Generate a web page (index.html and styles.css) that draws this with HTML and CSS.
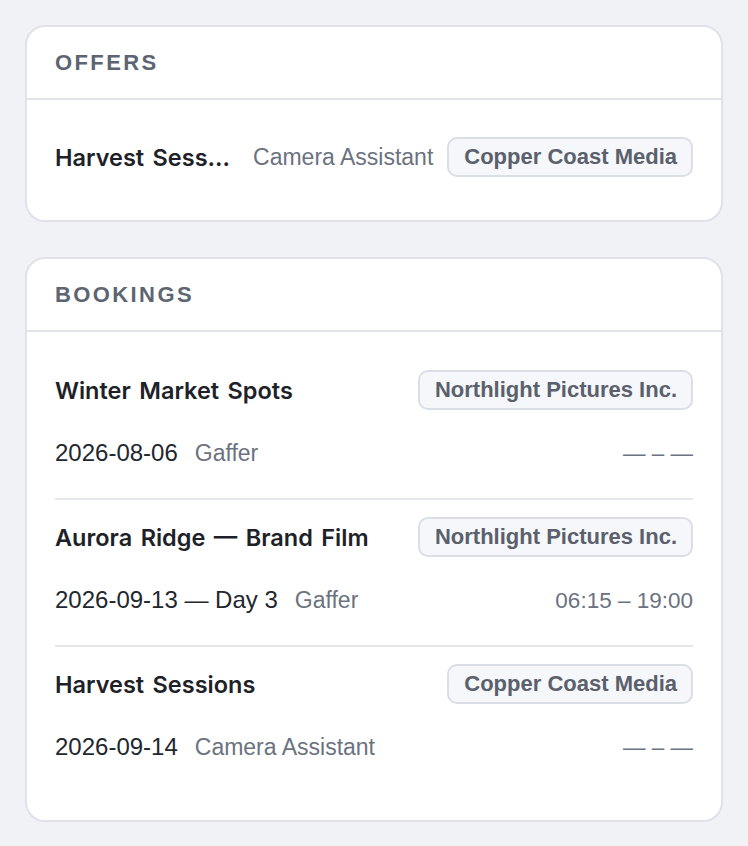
FILE: index.html
```html
<!DOCTYPE html>
<html lang="en">
<head>
<meta charset="UTF-8">
<meta name="viewport" content="width=device-width, initial-scale=1.0">
<title>Crew Schedule</title>
<link rel="stylesheet" href="styles.css">
</head>
<body>

<div class="board">
  <section class="panel">
    <div class="panel-head">
      <h2 class="panel-title">Offers</h2>
    </div>
    <div class="offer-list">
      <div class="offer-row">
        <span class="job-name offer-name">Harvest Sessions</span>
        <span class="job-role">Camera Assistant</span>
        <span class="company-tag">Copper Coast Media</span>
      </div>
    </div>
  </section>

  <section class="panel">
    <div class="panel-head">
      <h2 class="panel-title">Bookings</h2>
    </div>
    <div class="booking-list">
      <div class="booking">
        <div class="booking-top">
          <span class="job-name">Winter Market Spots</span>
          <span class="company-tag">Northlight Pictures Inc.</span>
        </div>
        <div class="booking-meta">
          <span class="booking-date">2026-08-06</span>
          <span class="job-role">Gaffer</span>
          <span class="booking-time">— – —</span>
        </div>
      </div>
      <div class="booking">
        <div class="booking-top">
          <span class="job-name">Aurora Ridge — Brand Film</span>
          <span class="company-tag">Northlight Pictures Inc.</span>
        </div>
        <div class="booking-meta">
          <span class="booking-date">2026-09-13 — Day 3</span>
          <span class="job-role">Gaffer</span>
          <span class="booking-time">06:15 – 19:00</span>
        </div>
      </div>
      <div class="booking">
        <div class="booking-top">
          <span class="job-name">Harvest Sessions</span>
          <span class="company-tag">Copper Coast Media</span>
        </div>
        <div class="booking-meta">
          <span class="booking-date">2026-09-14</span>
          <span class="job-role">Camera Assistant</span>
          <span class="booking-time">— – —</span>
        </div>
      </div>
    </div>
  </section>
</div>

</body>
</html>
```

FILE: styles.css
```css
body {
  font-family: "Liberation Sans", Arial, sans-serif;
  margin: 0;
  padding: 25px;
  background-color: #f0f2f6;
  color: #1e2228;
}
.board {
  display: flex;
  flex-direction: column;
  gap: 35px;
}
.panel {
  background-color: #fff;
  border: 2px solid #dfe2e8;
  border-radius: 20px;
}
.panel-head {
  height: 71px;
  display: flex;
  align-items: center;
  padding: 0 28px;
  border-bottom: 2px solid #e1e4e9;
}
.panel-title {
  margin: 0;
  font-size: 22px;
  font-weight: bold;
  letter-spacing: 2.4px;
  text-transform: uppercase;
  color: #5d6573;
}
.offer-list {
  padding: 37px 28px 43px;
}
.offer-row {
  display: flex;
  align-items: center;
  height: 40px;
}
/* project names use a semibold weight, Liberation only ships regular/bold */
.job-name {
  font-family: Inter, "Liberation Sans", sans-serif;
  font-size: 23.5px;
  font-weight: 600;
  word-spacing: 2.5px;
  color: #1e2228;
  white-space: nowrap;
}
.offer-name {
  flex: 1;
  min-width: 0;
  overflow: hidden;
  text-overflow: ellipsis;
  margin-right: 20px;
}
.job-role {
  font-size: 23px;
  color: #6b7280;
  white-space: nowrap;
}
.offer-row .job-role {
  margin-right: 14px;
}
.company-tag {
  display: inline-flex;
  align-items: center;
  height: 40px;
  box-sizing: border-box;
  padding: 0 14px 0 15px;
  border: 2px solid #dadee5;
  border-radius: 10px;
  background-color: #f5f7fa;
  font-size: 22px;
  font-weight: bold;
  color: #5a606c;
  white-space: nowrap;
}
.booking-list {
  padding: 21px 28px 28px;
}
.booking {
  padding: 17px 0 22px;
  border-bottom: 2px solid #e4e7eb;
}
.booking:last-child {
  border-bottom: none;
}
.booking-top {
  display: flex;
  align-items: center;
  justify-content: space-between;
  height: 40px;
}
.booking-meta {
  display: flex;
  align-items: baseline;
  margin-top: 21px;
  line-height: 44px;
}
.booking-date {
  font-size: 24px;
  color: #23272e;
  margin-right: 17px;
}
.booking-time {
  margin-left: auto;
  font-size: 22.5px;
  color: #6b7280;
}
```
